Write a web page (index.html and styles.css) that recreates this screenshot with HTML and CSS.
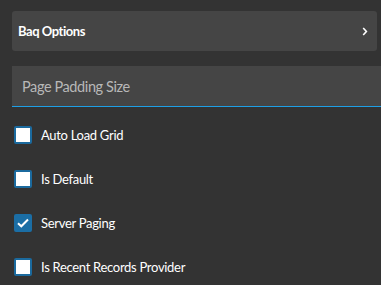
FILE: index.html
```html
<!DOCTYPE html>
<html>
<head>
<meta charset="utf-8">
<link rel="stylesheet" href="styles.css">
</head>
<body>
<div class="page">
  <div class="panel">
    <span class="panel-title">Baq Options</span>
    <svg class="chevron" width="6" height="9" viewBox="0 0 6 9"><path d="M1.2 1 L4.4 4.5 L1.2 8" fill="none" stroke="#fff" stroke-width="1.6"/></svg>
  </div>
  <div class="field">
    <span class="placeholder">Page Padding Size</span>
  </div>
  <div class="checks">
    <label class="check"><span class="box"></span><span class="lbl">Auto Load Grid</span></label>
    <label class="check"><span class="box"></span><span class="lbl">Is Default</span></label>
    <label class="check"><span class="box on"><svg width="12" height="10" viewBox="0 0 12 10"><path d="M1 5.2 L4.3 8.3 L11 1.5" fill="none" stroke="#fff" stroke-width="2"/></svg></span><span class="lbl">Server Paging</span></label>
    <label class="check"><span class="box"></span><span class="lbl">Is Recent Records Provider</span></label>
  </div>
</div>
</body>
</html>
```
FILE: styles.css
```css
html, body {
  margin: 0;
  padding: 0;
  background: #333333;
  font-family: Lato, "Open Sans", sans-serif;
  overflow: hidden;
}
.page {
  padding: 11px 0 0 12px;
  width: 381px;
  box-sizing: border-box;
}
.panel {
  display: flex;
  align-items: center;
  justify-content: space-between;
  height: 40px;
  margin-right: 4px;
  background: #454545;
  border-radius: 3px;
  padding: 0 9px 0 6px;
}
.panel-title {
  color: #ffffff;
  font-weight: 700;
  font-size: 13px;
  letter-spacing: -0.45px;
}
.chevron {
  display: block;
}
.field {
  margin-top: 15px;
  height: 40px;
  margin-right: -10px;
  background: #454545;
  border-bottom: 1px solid #1e9fe6;
  display: flex;
  align-items: center;
  padding-left: 10px;
}
.placeholder {
  color: #b8b8b8;
  font-size: 14.5px;
  letter-spacing: -0.4px;
}
.checks {
  margin-top: 19px;
  display: flex;
  flex-direction: column;
  gap: 26px;
  padding-left: 2px;
}
.check {
  display: flex;
  align-items: center;
  gap: 9px;
  height: 18px;
}
.box {
  width: 18px;
  height: 18px;
  box-sizing: border-box;
  border: 2px solid #1b6a9e;
  border-radius: 2px;
  background: #ffffff;
  display: flex;
  align-items: center;
  justify-content: center;
}
.box.on {
  background: #1b6ea5;
  border-color: #1b6ea5;
}
.box svg { display: block; }
.lbl {
  color: #ffffff;
  font-size: 13px;
  letter-spacing: -0.3px;
}
```
